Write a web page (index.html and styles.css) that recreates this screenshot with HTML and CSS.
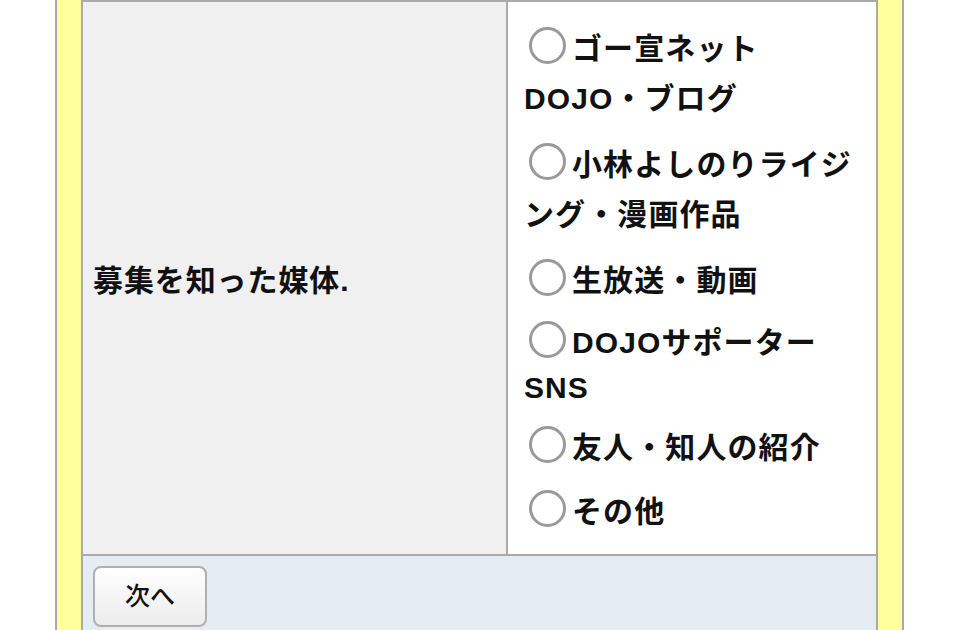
FILE: index.html
```html
<!DOCTYPE html>
<html lang="ja">
<head>
<meta charset="utf-8">
<title>募集を知った媒体</title>
<link rel="stylesheet" href="styles.css">
</head>
<body>
<div class="wrap">
  <div class="table">
    <div class="row">
      <div class="th">募集を知った媒体.</div>
      <div class="td">
        <div class="opt">
          <div class="line1"><span class="radio"></span><span>ゴー宣ネット</span></div>
          <div class="line2">DOJO・ブログ</div>
        </div>
        <div class="opt">
          <div class="line1"><span class="radio"></span><span>小林よしのりライジ</span></div>
          <div class="line2">ング・漫画作品</div>
        </div>
        <div class="opt">
          <div class="line1"><span class="radio"></span><span>生放送・動画</span></div>
        </div>
        <div class="opt">
          <div class="line1"><span class="radio"></span><span>DOJOサポーター</span></div>
          <div class="line2 latin">SNS</div>
        </div>
        <div class="opt">
          <div class="line1"><span class="radio"></span><span>友人・知人の紹介</span></div>
        </div>
        <div class="opt">
          <div class="line1"><span class="radio"></span><span>その他</span></div>
        </div>
      </div>
    </div>
    <div class="foot">
      <button class="btn" type="button">次へ</button>
    </div>
  </div>
</div>
</body>
</html>
```

FILE: styles.css
```css
html, body {
  margin: 0;
  padding: 0;
  background: #ffffff;
}

body {
  font-family: "Liberation Sans", "Noto Sans CJK JP", sans-serif;
  color: #111111;
}

.wrap {
  box-sizing: border-box;
  width: 849px;
  margin-left: 55px;
  border-left: 2px solid #a8a8a8;
  border-right: 2px solid #a8a8a8;
  background: #ffff9c;
  padding: 0 24px;
  min-height: 700px;
}

.table {
  border: 2px solid #aaaaaa;
  border-bottom: none;
}

.row {
  display: grid;
  grid-template-columns: 423px 1fr;
}

.th {
  background: #f0f0f0;
  display: flex;
  align-items: center;
  padding-left: 10px;
  font-size: 30px;
  font-weight: bold;
  letter-spacing: 0.9px;
}

.td {
  background: #ffffff;
  border-left: 2px solid #aaaaaa;
  padding: 17px 16px 10px 16px;
  font-size: 30px;
  font-weight: bold;
  letter-spacing: 1.1px;
}

.opt {
  margin-bottom: 9px;
}

.opt:nth-child(5) {
  margin-bottom: 11px;
}

.line1 {
  display: flex;
  align-items: center;
  height: 53px;
  white-space: nowrap;
}

.radio {
  box-sizing: border-box;
  flex: none;
  width: 37px;
  height: 37px;
  border: 3px solid #9a9a9a;
  border-radius: 50%;
  background: #ffffff;
  margin: 0 6px 0 5px;
}

.line2 {
  height: 54px;
  line-height: 54px;
  white-space: nowrap;
}

.line2.latin {
  height: 43px;
  line-height: 43px;
}

.foot {
  border-top: 2px solid #aaaaaa;
  background: #e6ecf4;
  padding: 10px 10px 20px 10px;
  display: flex;
}

.btn {
  box-sizing: border-box;
  width: 114px;
  height: 61px;
  border: 2px solid #b0b0b0;
  border-radius: 8px;
  background: linear-gradient(#ffffff, #ececec);
  font-family: "Noto Sans CJK JP", sans-serif;
  font-size: 25px;
  font-weight: 500;
  color: #111111;
  padding: 0 0 5px 0;
}
```
